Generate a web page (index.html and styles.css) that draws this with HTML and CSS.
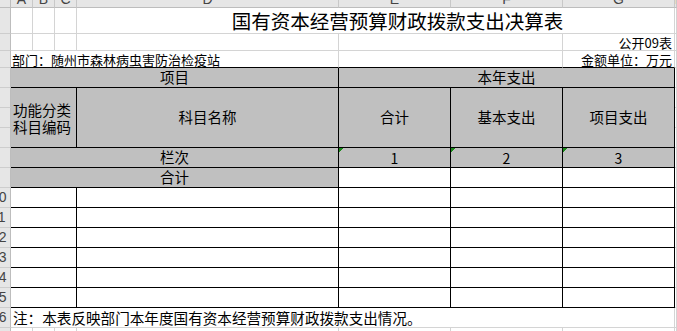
FILE: index.html
```html
<!DOCTYPE html>
<html lang="zh-CN">
<head>
<meta charset="utf-8">
<title>国有资本经营预算财政拨款支出决算表</title>
<link rel="stylesheet" href="styles.css">
</head>
<body>
<div class="sheet">
  <div class="corner"></div>
  <div class="ch"><span>A</span></div>
  <div class="ch"><span>B</span></div>
  <div class="ch"><span>C</span></div>
  <div class="ch"><span>D</span></div>
  <div class="ch"><span>E</span></div>
  <div class="ch"><span>F</span></div>
  <div class="ch"><span>G</span></div>
  <div class="ch"><span>H</span></div>

  <div class="rh"></div>
  <div class="c"></div><div class="c"></div><div class="c"></div>
  <div class="c s4 title">国有资本经营预算财政拨款支出决算表</div>
  <div class="c"></div>

  <div class="rh"></div>
  <div class="c"></div><div class="c"></div><div class="c"></div><div class="c"></div>
  <div class="c s2"></div>
  <div class="c small right">公开09表</div>
  <div class="c"></div>

  <div class="rh"></div>
  <div class="c s4 small top-edge">部门：随州市森林病虫害防治检疫站</div>
  <div class="c s2 top-edge"></div>
  <div class="c small right top-edge">金额单位：万元</div>
  <div class="c"></div>

  <div class="rh"></div>
  <div class="t g s4 mid">项目</div>
  <div class="t g s3 mid">本年支出</div>
  <div class="c"></div>

  <div class="rh"></div>
  <div class="t g s3 r3 code"><span class="line">功能分类</span><span class="line">科目编码</span></div>
  <div class="t g r3 mid">科目名称</div>
  <div class="t g r3 mid">合计</div>
  <div class="t g r3 mid">基本支出</div>
  <div class="t g r3 mid">项目支出</div>
  <div class="c"></div>
  <div class="rh"></div><div class="c"></div>
  <div class="rh"></div><div class="c"></div>

  <div class="rh"></div>
  <div class="t g s4 mid">栏次</div>
  <div class="t g mid num flag">1</div>
  <div class="t g mid num flag">2</div>
  <div class="t g mid num flag">3</div>
  <div class="c"></div>

  <div class="rh"></div>
  <div class="t g s4 mid">合计</div>
  <div class="t"></div><div class="t"></div><div class="t"></div>
  <div class="c"></div>

  <div class="rh"><span>10</span></div>
  <div class="t s3"></div><div class="t"></div><div class="t"></div><div class="t"></div><div class="t"></div>
  <div class="c"></div>
  <div class="rh"><span>11</span></div>
  <div class="t s3"></div><div class="t"></div><div class="t"></div><div class="t"></div><div class="t"></div>
  <div class="c"></div>
  <div class="rh"><span>12</span></div>
  <div class="t s3"></div><div class="t"></div><div class="t"></div><div class="t"></div><div class="t"></div>
  <div class="c"></div>
  <div class="rh"><span>13</span></div>
  <div class="t s3"></div><div class="t"></div><div class="t"></div><div class="t"></div><div class="t"></div>
  <div class="c"></div>
  <div class="rh"><span>14</span></div>
  <div class="t s3"></div><div class="t"></div><div class="t"></div><div class="t"></div><div class="t"></div>
  <div class="c"></div>
  <div class="rh"><span>15</span></div>
  <div class="t s3"></div><div class="t"></div><div class="t"></div><div class="t"></div><div class="t"></div>
  <div class="c"></div>

  <div class="rh"><span>16</span></div>
  <div class="c s7 note">注：本表反映部门本年度国有资本经营预算财政拨款支出情况。</div>
  <div class="c"></div>

  <div class="rh"><span>17</span></div>
  <div class="c"></div><div class="c"></div><div class="c"></div><div class="c"></div>
  <div class="c"></div><div class="c"></div><div class="c"></div><div class="c"></div>
</div>
</body>
</html>
```

FILE: styles.css
```css
* { box-sizing: border-box; margin: 0; padding: 0; }

html, body {
  width: 677px;
  height: 331px;
  overflow: hidden;
  background: #ffffff;
}

body {
  font-family: "Noto Sans CJK SC", "Noto Sans", sans-serif;
  color: #000;
}

.sheet {
  display: grid;
  grid-template-columns: 11px 22px 22px 22px 262px 112px 112px 112px 1fr;
  grid-template-rows: 8px 26px 17px 17px 20px 20px 20px 20px 20px 20px 20px 20px 20px 20px 20px 20px 20px 20px;
  width: 677px;
  height: 331px;
  overflow: hidden;
}

.corner {
  background: #e6e6e6;
  border-right: 1px solid #bdbdbd;
  border-bottom: 1px solid #bdbdbd;
}

.ch {
  background: #e6e6e6;
  border-right: 1px solid #c8c8c8;
  border-bottom: 1px solid #bdbdbd;
  overflow: hidden;
  text-align: center;
  font-family: "Liberation Sans", Arial, sans-serif;
  font-size: 14px;
  color: #444;
}

.ch span {
  display: block;
  line-height: 14px;
  margin-top: -8px;
}

.rh {
  background: #e6e6e6;
  border-right: 1px solid #bdbdbd;
  border-bottom: 1px solid #cdcdcd;
  overflow: hidden;
  font-family: "Liberation Sans", Arial, sans-serif;
  font-size: 14px;
  color: #444;
  line-height: 19px;
  white-space: nowrap;
}

.rh span {
  display: block;
  margin-left: -9px;
}

.c {
  border-right: 1px solid #d4d4d4;
  border-bottom: 1px solid #d4d4d4;
  display: flex;
  align-items: center;
  white-space: nowrap;
  line-height: 1;
}

.t {
  border-right: 1px solid #000;
  border-bottom: 1px solid #000;
  display: flex;
  align-items: center;
  background: #fff;
  line-height: 1;
}

.g { background: #c0c0c0; }

.s2 { grid-column: span 2; }
.s3 { grid-column: span 3; }
.s4 { grid-column: span 4; }
.s7 { grid-column: span 7; }
.r3 { grid-row: span 3; }

.title {
  justify-content: center;
  padding-left: 44px;
  font-size: 19.5px;
}

.small {
  font-size: 13px;
  align-items: flex-end;
  padding-bottom: 1px;
}

.right {
  justify-content: flex-end;
  padding-right: 2px;
}

.top-edge {
  border-bottom-color: #000;
}

.small:not(.right) {
  padding-left: 1px;
}

.mid {
  justify-content: center;
  font-size: 14.5px;
}

.code {
  flex-direction: column;
  align-items: flex-start;
  justify-content: center;
  gap: 2px;
  font-size: 14.5px;
  padding-left: 2px;
  padding-top: 1px;
}

.code .line {
  display: block;
  line-height: 15px;
}

.num {
  font-size: 14px;
}

.flag {
  background: linear-gradient(135deg, #1a8a1a 0 3px, transparent 3px) 0 0 / 6px 6px no-repeat, #c0c0c0;
}

.note {
  font-size: 14.6px;
  padding-left: 2px;
  padding-top: 1px;
}
```
